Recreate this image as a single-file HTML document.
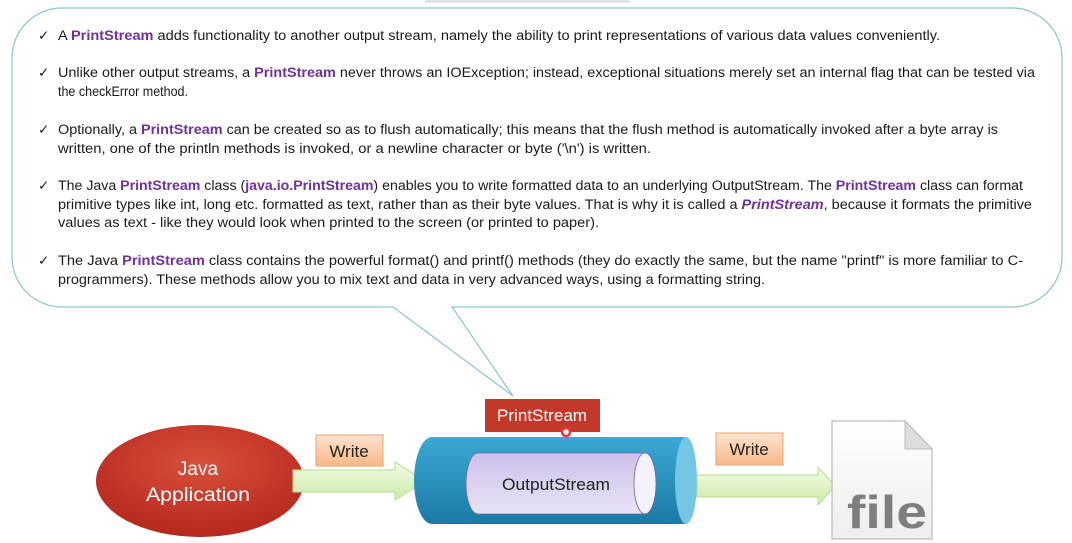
<!DOCTYPE html>
<html><head><meta charset="utf-8"><style>
html,body{margin:0;padding:0;background:#fff;width:1072px;height:543px;overflow:hidden}
svg{display:block}
text{font-family:"Liberation Sans",sans-serif}
.t{font-size:13.4px;fill:#1a1a1a}
.b{font-weight:bold;fill:#7030a0}
</style></head><body>
<svg width="1072" height="543" viewBox="0 0 1072 543" xmlns="http://www.w3.org/2000/svg">
<defs>
<radialGradient id="red" cx="50%" cy="35%" r="65%"><stop offset="0" stop-color="#d9503c"/><stop offset="1" stop-color="#b5281e"/></radialGradient>
<linearGradient id="org" x1="0" y1="0" x2="0" y2="1"><stop offset="0" stop-color="#fde3cf"/><stop offset="1" stop-color="#f8b887"/></linearGradient>
<linearGradient id="grn" x1="0" y1="0" x2="0" y2="1"><stop offset="0" stop-color="#f3fbe6"/><stop offset="1" stop-color="#cdeaa8"/></linearGradient>
<linearGradient id="blu" x1="0" y1="0" x2="0" y2="1"><stop offset="0" stop-color="#3aa9d4"/><stop offset="1" stop-color="#1b7aa6"/></linearGradient>
<linearGradient id="pur" x1="0" y1="0" x2="0" y2="1"><stop offset="0" stop-color="#cdc0ea"/><stop offset="1" stop-color="#e9e3f5"/></linearGradient>
<linearGradient id="fil" x1="0" y1="0" x2="0" y2="1"><stop offset="0" stop-color="#ffffff"/><stop offset="1" stop-color="#eeeeee"/></linearGradient>
</defs>
<rect x="425" y="0" width="205" height="3" fill="#e4e4e4"/>
<path d="M60,8 H1012 A50,50 0 0 1 1062,58 V257 A50,50 0 0 1 1012,307 H452 L513,396 L393,307 H62 A50,50 0 0 1 12,257 V58 A50,50 0 0 1 60,8 Z" fill="#fff" stroke="#8ec3d0" stroke-width="1.2"/>
<g class="t">
<text x="38" y="40">✓</text><text x="38" y="77">✓</text><text x="38" y="134">✓</text><text x="38" y="190">✓</text><text x="38" y="265">✓</text>
<text x="58" y="40" textLength="882" lengthAdjust="spacingAndGlyphs">A <tspan class="b">PrintStream</tspan> adds functionality to another output stream, namely the ability to print representations of various data values conveniently.</text>
<text x="58" y="77" textLength="977" lengthAdjust="spacingAndGlyphs">Unlike other output streams, a <tspan class="b">PrintStream</tspan> never throws an IOException; instead, exceptional situations merely set an internal flag that can be tested via</text>
<text x="58" y="96" textLength="130" lengthAdjust="spacingAndGlyphs">the checkError method.</text>
<text x="58" y="134" textLength="940" lengthAdjust="spacingAndGlyphs">Optionally, a <tspan class="b">PrintStream</tspan> can be created so as to flush automatically; this means that the flush method is automatically invoked after a byte array is</text>
<text x="58" y="153" textLength="593" lengthAdjust="spacingAndGlyphs">written, one of the println methods is invoked, or a newline character or byte ('\n') is written.</text>
<text x="58" y="190" textLength="965" lengthAdjust="spacingAndGlyphs">The Java <tspan class="b">PrintStream</tspan> class (<tspan class="b">java.io.PrintStream</tspan>) enables you to write formatted data to an underlying OutputStream. The <tspan class="b">PrintStream</tspan> class can format</text>
<text x="58" y="209" textLength="974" lengthAdjust="spacingAndGlyphs">primitive types like int, long etc. formatted as text, rather than as their byte values. That is why it is called a <tspan class="b" font-style="italic">PrintStream</tspan>, because it formats the primitive</text>
<text x="58" y="227" textLength="541" lengthAdjust="spacingAndGlyphs">values as text - like they would look when printed to the screen (or printed to paper).</text>
<text x="58" y="265" textLength="965" lengthAdjust="spacingAndGlyphs">The Java <tspan class="b">PrintStream</tspan> class contains the powerful format() and printf() methods (they do exactly the same, but the name "printf" is more familiar to C-</text>
<text x="58" y="284" textLength="707" lengthAdjust="spacingAndGlyphs">programmers). These methods allow you to mix text and data in very advanced ways, using a formatting string.</text>
</g>
<ellipse cx="200" cy="481" rx="104" ry="56" fill="url(#red)"/>
<text x="198" y="475" font-size="19" fill="#fff" text-anchor="middle">Java</text>
<text x="198" y="501" font-size="19" fill="#fff" text-anchor="middle" textLength="104" lengthAdjust="spacingAndGlyphs">Application</text>
<path d="M293,470 H395 V462 L425,481 L395,500 V492 H293 Z" fill="url(#grn)" stroke="#b6dc8c"/>
<rect x="316" y="435" width="67" height="31" fill="url(#org)" stroke="#e7a56f"/>
<text x="349" y="457" font-size="17" fill="#222" text-anchor="middle">Write</text>
<path d="M432,437 H686 V524 H432 A18,43.5 0 0 1 432,437 Z" fill="url(#blu)"/>
<ellipse cx="686" cy="480.5" rx="11" ry="43.5" fill="#74c6e4"/>
<path d="M478,453 H645 V514 H478 A12,30.5 0 0 1 478,453 Z" fill="url(#pur)" stroke="#6a6aa0" stroke-width="0.8"/>
<ellipse cx="645" cy="483.5" rx="11" ry="30.5" fill="#f4f2fb" stroke="#6a6aa0" stroke-width="0.8"/>
<text x="556" y="490" font-size="17" fill="#222" text-anchor="middle" textLength="108" lengthAdjust="spacingAndGlyphs">OutputStream</text>
<rect x="485" y="399" width="115" height="33" fill="#c2392b"/>
<text x="542" y="421" font-size="17" fill="#fff" text-anchor="middle" textLength="90" lengthAdjust="spacingAndGlyphs">PrintStream</text>
<circle cx="566" cy="432" r="4" fill="#fff" stroke="#e33" stroke-width="2.5"/>
<path d="M697,475 H818 V467 L835,486 L818,505 V497 H697 Z" fill="url(#grn)" stroke="#b6dc8c"/>
<rect x="716" y="433" width="67" height="32" fill="url(#org)" stroke="#e7a56f"/>
<text x="749" y="455" font-size="17" fill="#222" text-anchor="middle">Write</text>
<path d="M832,421 H905 L932,449 V539 H832 Z" fill="url(#fil)" stroke="#bbb" stroke-width="1.2"/>
<path d="M905,421 V449 H932 Z" fill="#ddd" stroke="#bbb" stroke-width="1"/>
<text x="887" y="528" font-size="46" font-weight="bold" fill="#7e7e7e" text-anchor="middle" textLength="80" lengthAdjust="spacingAndGlyphs">file</text>
</svg>
</body></html>
